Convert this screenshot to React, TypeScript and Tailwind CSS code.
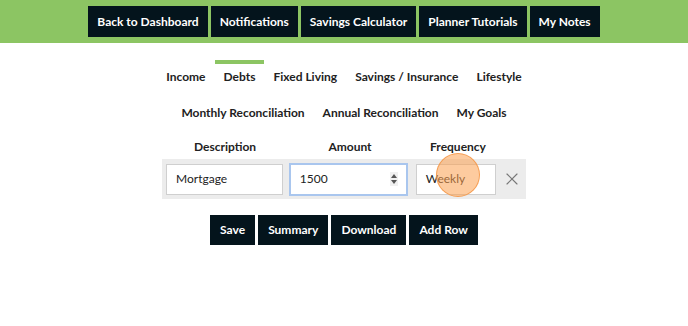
import React from "react";
import { X } from "lucide-react";

const topLinks = ["Back to Dashboard", "Notifications", "Savings Calculator", "Planner Tutorials", "My Notes"];
const tabsRow1 = ["Income", "Debts", "Fixed Living", "Savings / Insurance", "Lifestyle"];
const tabsRow2 = ["Monthly Reconciliation", "Annual Reconciliation", "My Goals"];
const actions = ["Save", "Summary", "Download", "Add Row"];

function Tab({ label, active }: { label: string; active?: boolean }) {
  return (
    <div
      className={`h-[36px] px-[9px] pt-[5px] border-t-4 text-[12px] font-bold leading-[16px] text-[#222] ${
        active ? "border-[#8cc563]" : "border-transparent"
      }`}
    >
      {label}
    </div>
  );
}

export default function App() {
  return (
    <div className="w-[688px] h-[326px] bg-white font-['Lato',sans-serif] overflow-hidden">
      {/* Top bar */}
      <header className="h-[43px] bg-[#8cc563] flex justify-center items-start pt-[6px] gap-[3px]">
        {topLinks.map((l) => (
          <button
            key={l}
            className="h-[31px] px-[9px] bg-[#04141c] text-white text-[12px] font-bold leading-none"
          >
            {l}
          </button>
        ))}
      </header>

      {/* Tabs */}
      <nav className="mt-[17px] flex flex-col items-center">
        <div className="flex">
          {tabsRow1.map((t) => (
            <Tab key={t} label={t} active={t === "Debts"} />
          ))}
        </div>
        <div className="flex">
          {tabsRow2.map((t) => (
            <Tab key={t} label={t} />
          ))}
        </div>
      </nav>

      {/* Table */}
      <div className="flex flex-col items-center mt-[7px]">
        <div className="w-[364px] px-[4px] flex gap-[6px] text-[12px] font-bold leading-[16px] text-[#222]">
          <div className="w-[118px] text-center">Description</div>
          <div className="w-[120px] text-center">Amount</div>
          <div className="w-[80px] ml-[2px] text-center">Frequency</div>
        </div>
        <div className="mt-[4px] w-[364px] h-[40px] bg-[#ececec] px-[4px] flex items-center text-[12px] text-[#222]">
          <div className="w-[118px] h-[31px] bg-white border border-[#cfcfcf] flex items-center px-[9px]">
            Mortgage
          </div>
          <div className="ml-[6px] w-[120px] h-[33px] bg-white border-2 border-[#a9c6ee] flex items-center pl-[9px] pr-[8px]">
            <span className="flex-1">1500</span>
            <div className="w-[8px] h-[14px] bg-[#f0f0f0] flex flex-col items-center justify-center gap-[2px]">
              <div className="w-0 h-0 border-l-[3px] border-r-[3px] border-b-[4px] border-l-transparent border-r-transparent border-b-[#555]" />
              <div className="w-0 h-0 border-l-[3px] border-r-[3px] border-t-[4px] border-l-transparent border-r-transparent border-t-[#555]" />
            </div>
          </div>
          <div className="relative ml-[8px] w-[81px] h-[31px] bg-white border border-[#cfcfcf] flex items-center px-[9px]">
            Weekly
            <div className="absolute left-[19px] top-[-12px] w-[44px] h-[44px] rounded-full bg-[rgba(251,160,80,0.55)] border-[1.5px] border-[rgba(245,150,70,0.85)]" />
          </div>
          <div className="ml-[6px] flex items-center text-[#777]">
            <X size={20} strokeWidth={1.4} />
          </div>
        </div>
      </div>

      {/* Actions */}
      <div className="mt-[16px] flex justify-center gap-[3px]">
        {actions.map((a) => (
          <button
            key={a}
            className="h-[30px] px-[10px] bg-[#04141c] text-white text-[12px] font-bold leading-none"
          >
            {a}
          </button>
        ))}
      </div>
    </div>
  );
}
